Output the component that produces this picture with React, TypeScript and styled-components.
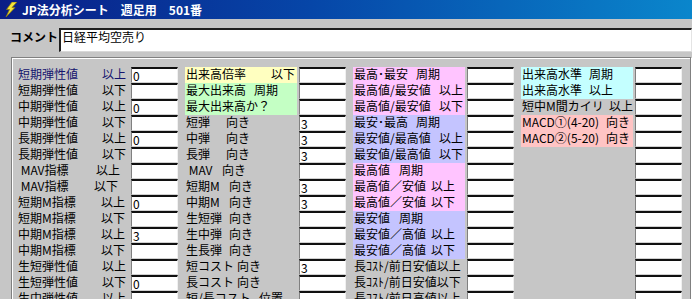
import styled, { createGlobalStyle } from "styled-components";

const GlobalStyle = createGlobalStyle`
  body {
    margin: 0;
    background: #c6c6c6;
    font-family: "Noto Sans CJK JP", sans-serif;
  }
`;

const Window = styled.div`
  width: 692px;
  height: 299px;
  overflow: hidden;
  background: #c6c6c6;
  display: flex;
  flex-direction: column;
`;

const TitleBar = styled.div`
  height: 19px;
  flex: none;
  display: flex;
  align-items: center;
  gap: 5px;
  padding-left: 5px;
  background: linear-gradient(90deg, #0a1e86 0%, #0646a8 45%, #0a86cc 100%);
  color: #fff;
  font-weight: bold;
  font-size: 12px;
  line-height: 16px;
  white-space: pre;
`;

const CommentRow = styled.div`
  display: flex;
  align-items: flex-start;
  margin-top: 9px;
  padding-left: 10px;
  height: 24px;
  flex: none;
`;

const CommentLabel = styled.div`
  width: 49px;
  padding-top: 2px;
  font-size: 12px;
  line-height: 14px;
  font-weight: bold;
  color: #000;
`;

const CommentBox = styled.div`
  flex: 1;
  height: 24px;
  box-sizing: border-box;
  background: #fff;
  border-style: solid;
  border-width: 2px 1px 1px 2px;
  border-color: #202020 #e4e4e4 #d8d8d8 #202020;
  padding: 0 1px;
  font-size: 12px;
  line-height: 14px;
  color: #000;
`;

const Panel = styled.div`
  flex: 1;
  margin: 5px 1px 0 11px;
  border: 1px solid #808080;
  box-shadow: inset 1px 1px 0 #fff, 1px 1px 0 #fff;
  padding: 9px 0 0 5px;
`;

const Columns = styled.div`
  display: flex;
  gap: 7px;
`;

const Column = styled.div`
  display: flex;
  flex-direction: column;
  width: 161px;
`;

const Row = styled.div`
  display: grid;
  grid-template-columns: 112px 47px;
  column-gap: 2px;
  height: 16px;
`;

const Label = styled.div<{ $bg?: string; $ink?: string }>`
  background: ${(p) => p.$bg || "transparent"};
  color: ${(p) => p.$ink || "#000"};
  padding-left: 1px;
  font-size: 12px;
  line-height: 14px;
  white-space: pre;
  display: flex;
  align-items: flex-start;
`;

const Name = styled.span<{ $w?: number }>`
  display: inline-block;
  flex: none;
  width: ${(p) => (p.$w ? `${p.$w}px` : "auto")};
`;

const Cell = styled.div`
  box-sizing: border-box;
  height: 16px;
  background: #fff;
  border-style: solid;
  border-width: 2px 1px 1px 1px;
  border-color: #101010 #f0f0f0 #d0d0d0 #808080;
  padding-left: 1px;
  font-size: 12px;
  line-height: 13px;
  color: #000;
`;

const YELLOW = "#ffffc0";
const GREEN = "#c4ffc4";
const PINK = "#ffc4ff";
const LAV = "#c4c4ff";
const CYAN = "#c4ffff";
const SALMON = "#ffc4c4";

type Item = { n?: string; c?: string; w?: number; v?: string; bg?: string; ink?: string };

const col1: Item[] = [
  { n: "短期弾性値", c: "以上", w: 84, v: "0", ink: "#14146e" },
  { n: "短期弾性値", c: "以下", w: 84 },
  { n: "中期弾性値", c: "以上", w: 84, v: "0" },
  { n: "中期弾性値", c: "以下", w: 84 },
  { n: "長期弾性値", c: "以上", w: 84, v: "0" },
  { n: "長期弾性値", c: "以下", w: 84 },
  { n: " MAV指標", c: "以上", w: 78 },
  { n: " MAV指標", c: "以下", w: 76 },
  { n: "短期M指標", c: "以上", w: 83, v: "0" },
  { n: "短期M指標", c: "以下", w: 83 },
  { n: "中期M指標", c: "以上", w: 83, v: "3" },
  { n: "中期M指標", c: "以下", w: 83 },
  { n: "生短弾性値", c: "以上", w: 84 },
  { n: "生短弾性値", c: "以下", w: 84, v: "0" },
  { n: "生中弾性値", c: "以上", w: 84 },
];

const col2: Item[] = [
  { n: "出来高倍率", c: "以下", w: 85, bg: YELLOW },
  { n: "最大出来高", c: "周期", w: 68, bg: GREEN },
  { n: "最大出来高か？", bg: GREEN },
  { n: "短弾", c: "向き", w: 40, v: "3" },
  { n: "中弾", c: "向き", w: 40, v: "3" },
  { n: "長弾", c: "向き", w: 40, v: "3" },
  { n: " MAV", c: "向き", w: 36 },
  { n: "短期M", c: "向き", w: 43, v: "3" },
  { n: "中期M", c: "向き", w: 43, v: "3" },
  { n: "生短弾", c: "向き", w: 43 },
  { n: "生中弾", c: "向き", w: 43 },
  { n: "生長弾", c: "向き", w: 43 },
  { n: "短コスト", c: "向き", w: 51, v: "3" },
  { n: "長コスト", c: "向き", w: 51 },
  { n: "短/長コスト", c: "位置", w: 73 },
];

const col3: Item[] = [
  { n: "最高･最安", c: "周期", w: 62, bg: PINK },
  { n: "最高値/最安値", c: "以上", w: 85, bg: PINK },
  { n: "最高値/最安値", c: "以下", w: 85, bg: PINK },
  { n: "最安･最高", c: "周期", w: 62, bg: LAV },
  { n: "最安値/最高値", c: "以上", w: 85, bg: LAV },
  { n: "最安値/最高値", c: "以下", w: 85, bg: LAV },
  { n: "最高値", c: "周期", w: 45, bg: PINK },
  { n: "最高値／安値", c: "以上", w: 77, bg: PINK },
  { n: "最高値／安値", c: "以下", w: 77, bg: PINK },
  { n: "最安値", c: "周期", w: 45, bg: LAV },
  { n: "最安値／高値", c: "以上", w: 77, bg: LAV },
  { n: "最安値／高値", c: "以下", w: 77, bg: LAV },
  { n: "長ｺｽﾄ/前日安値以上" },
  { n: "長ｺｽﾄ/前日安値以下" },
  { n: "長ｺｽﾄ/前日高値以上" },
];

const col4: Item[] = [
  { n: "出来高水準", c: "周期", w: 67, bg: CYAN },
  { n: "出来高水準", c: "以上", w: 67, bg: CYAN },
  { n: "短中M間カイリ", c: "以上", w: 87 },
  { n: "MACD①(4-20)", c: "向き", w: 84, bg: SALMON },
  { n: "MACD②(5-20)", c: "向き", w: 84, bg: SALMON },
  ...Array.from({ length: 10 }, () => ({})),
];

function Bolt() {
  return (
    <svg width="12" height="15" viewBox="0 0 12 15">
      <polygon
        points="7,0 12,0 7,5.5 10,5.5 1,15 4.5,7.5 1.5,7.5"
        fill="#f4e43a"
        stroke="#8a7a10"
        strokeWidth="0.8"
      />
    </svg>
  );
}

function FieldColumn({ items }: { items: Item[] }) {
  return (
    <Column>
      {items.map((it, i) => (
        <Row key={i}>
          <Label $bg={it.bg} $ink={it.ink}>
            <Name $w={it.c ? it.w : undefined}>{it.n}</Name>
            {it.c}
          </Label>
          <Cell>{it.v}</Cell>
        </Row>
      ))}
    </Column>
  );
}

export default function App() {
  return (
    <>
      <GlobalStyle />
      <Window>
        <TitleBar>
          <Bolt />
          <span>JP法分析シート　週足用　501番</span>
        </TitleBar>
        <CommentRow>
          <CommentLabel>コメント</CommentLabel>
          <CommentBox>日経平均空売り</CommentBox>
        </CommentRow>
        <Panel>
          <Columns>
            <FieldColumn items={col1} />
            <FieldColumn items={col2} />
            <FieldColumn items={col3} />
            <FieldColumn items={col4} />
          </Columns>
        </Panel>
      </Window>
    </>
  );
}
